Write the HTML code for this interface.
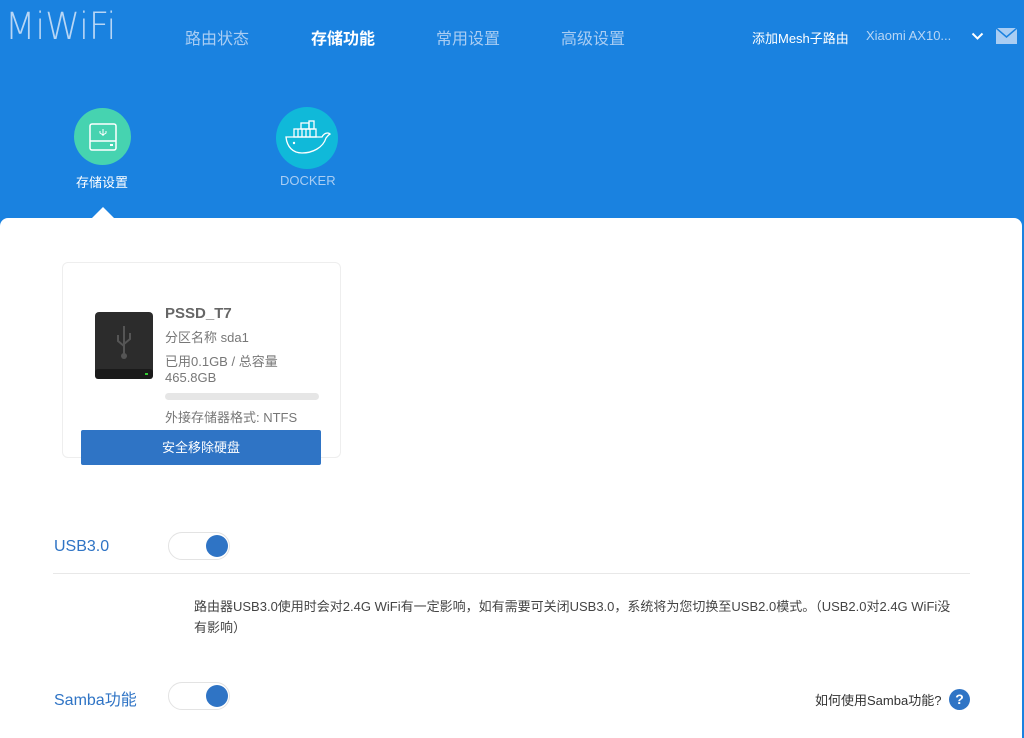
<!DOCTYPE html>
<html><head><meta charset="utf-8"><style>
*{margin:0;padding:0;box-sizing:border-box}
body{width:1024px;height:723px;overflow:hidden;background:#1a82e0;font-family:"Liberation Sans","Noto Sans CJK SC",sans-serif;position:relative}
.abs{position:absolute;white-space:nowrap}
.nav{top:25px;font-size:16px;color:#a9cdf3}
.panel{position:absolute;left:0;top:218px;width:1022px;height:520px;background:#fff;border-radius:8px 8px 0 0}
</style></head><body>
<div class="abs" style="left:5px;top:5px;font-size:37px;color:#b8d6f5;font-family:'DejaVu Sans','Liberation Sans',sans-serif;font-weight:200;transform:scaleX(0.95);transform-origin:left">MiWiFi</div>
<div class="abs nav" style="left:185px">路由状态</div>
<div class="abs nav" style="left:311px;color:#fff;font-weight:bold">存储功能</div>
<div class="abs nav" style="left:436px">常用设置</div>
<div class="abs nav" style="left:561px">高级设置</div>
<div class="abs" style="left:752px;top:28px;font-size:13px;color:#fff">添加Mesh子路由</div>
<div class="abs" style="left:866px;top:28px;font-size:13px;color:#b8d6f5">Xiaomi AX10...</div>
<svg class="abs" style="left:971px;top:32px" width="13" height="9" viewBox="0 0 13 9"><path d="M1.5 1.5l5 5 5-5" stroke="#fff" stroke-width="2" fill="none"/></svg>
<svg class="abs" style="left:996px;top:28px" width="21" height="16" viewBox="0 0 21 16"><rect width="21" height="16" fill="#a9cdf3"/><path d="M0 0l10.5 9L21 0" stroke="#1a82e0" stroke-width="1.5" fill="none"/></svg>

<div class="abs" style="left:74px;top:108px;width:57px;height:57px;border-radius:50%;background:#46d3b0"></div>
<svg class="abs" style="left:88px;top:122px" width="30" height="30" viewBox="0 0 30 30"><rect x="2" y="2" width="26" height="26" rx="2" fill="none" stroke="#fff" stroke-width="1.5"/><path d="M2 19h26" stroke="#fff" stroke-width="1.5"/><path d="M15 7v7M12 9v2l3 2M18 9v2l-3 2" stroke="#fff" fill="none"/><rect x="22" y="22" width="3" height="2" fill="#fff"/></svg>
<div class="abs" style="left:76px;top:172px;font-size:13px;color:#fff">存储设置</div>
<div class="abs" style="left:276px;top:107px;width:62px;height:62px;border-radius:50%;background:#10b9d9"></div>
<svg class="abs" style="left:284px;top:119px" width="48" height="36" viewBox="0 0 48 36"><g fill="none" stroke="#fff" stroke-width="1.3"><rect x="10" y="10" width="22" height="8"/><rect x="17" y="4" width="8" height="6"/><rect x="25" y="2" width="5" height="8"/><path d="M14 10v8M18 10v8M22 10v8M26 10v8M2 18h36c2-4 6-5 8-3-2 1-3 3-4 4-3 10-14 15-24 15C9 34 3 28 2 18z"/></g><circle cx="10" cy="24" r="1.2" fill="#fff"/></svg>
<div class="abs" style="left:280px;top:173px;font-size:13px;color:#a9cdf3">DOCKER</div>
<div class="abs" style="left:92px;top:207px;width:0;height:0;border-left:11px solid transparent;border-right:11px solid transparent;border-bottom:11px solid #fff"></div>

<div class="panel"></div>
<div class="abs" style="left:62px;top:262px;width:279px;height:196px;border:1px solid #eee;border-radius:6px;background:#fff"></div>
<svg class="abs" style="left:93px;top:311px" width="62" height="70" viewBox="0 0 62 70"><rect x="2" y="1" width="58" height="66" rx="4" fill="#2c2c2c"/><rect x="2" y="58" width="58" height="10" rx="3" fill="#1a1a1a"/><rect x="52" y="62" width="3" height="2" fill="#3c3"/><g stroke="#555" stroke-width="2" fill="none"><path d="M31 15v30M25 24v6l6 5M37 22v6l-6 5"/></g><circle cx="31" cy="45" r="3" fill="#555"/></svg>
<div class="abs" style="left:165px;top:305px;font-size:15px;font-weight:bold;color:#666">PSSD_T7</div>
<div class="abs" style="left:165px;top:327px;font-size:13px;color:#777">分区名称 sda1</div>
<div class="abs" style="left:165px;top:351px;font-size:13px;color:#777">已用0.1GB / 总容量</div>
<div class="abs" style="left:165px;top:370px;font-size:13px;color:#777">465.8GB</div>
<div class="abs" style="left:165px;top:393px;width:154px;height:7px;border-radius:4px;background:#e6e6e6"></div>
<div class="abs" style="left:165px;top:407px;font-size:13px;color:#777">外接存储器格式: NTFS</div>
<div class="abs" style="left:81px;top:430px;width:240px;height:35px;background:#2f74c5;border-radius:2px;color:#fff;font-size:13px;text-align:center;line-height:35px">安全移除硬盘</div>

<div class="abs" style="left:54px;top:538px;font-size:16px;color:#2f74c5">USB3.0</div>
<div class="abs" style="left:168px;top:532px;width:62px;height:28px;border:1px solid #e3e3e3;border-radius:14px;background:#fff"></div>
<div class="abs" style="left:206px;top:535px;width:22px;height:22px;border-radius:50%;background:#2f74c5"></div>
<div class="abs" style="left:53px;top:573px;width:917px;height:1px;background:#e8e8e8"></div>
<div class="abs" style="left:194px;top:596px;font-size:13px;color:#444;line-height:21px">路由器USB3.0使用时会对2.4G WiFi有一定影响，如有需要可关闭USB3.0，系统将为您切换至USB2.0模式。（USB2.0对2.4G WiFi没<br>有影响）</div>

<div class="abs" style="left:54px;top:686px;font-size:16px;color:#2f74c5">Samba功能</div>
<div class="abs" style="left:168px;top:682px;width:62px;height:28px;border:1px solid #e3e3e3;border-radius:14px;background:#fff"></div>
<div class="abs" style="left:206px;top:685px;width:22px;height:22px;border-radius:50%;background:#2f74c5"></div>
<div class="abs" style="left:815px;top:690px;font-size:13px;color:#333">如何使用Samba功能?</div>
<div class="abs" style="left:949px;top:689px;width:21px;height:21px;border-radius:50%;background:#2f74c5;color:#fff;font-size:14px;font-weight:bold;text-align:center;line-height:21px">?</div>
</body></html>
